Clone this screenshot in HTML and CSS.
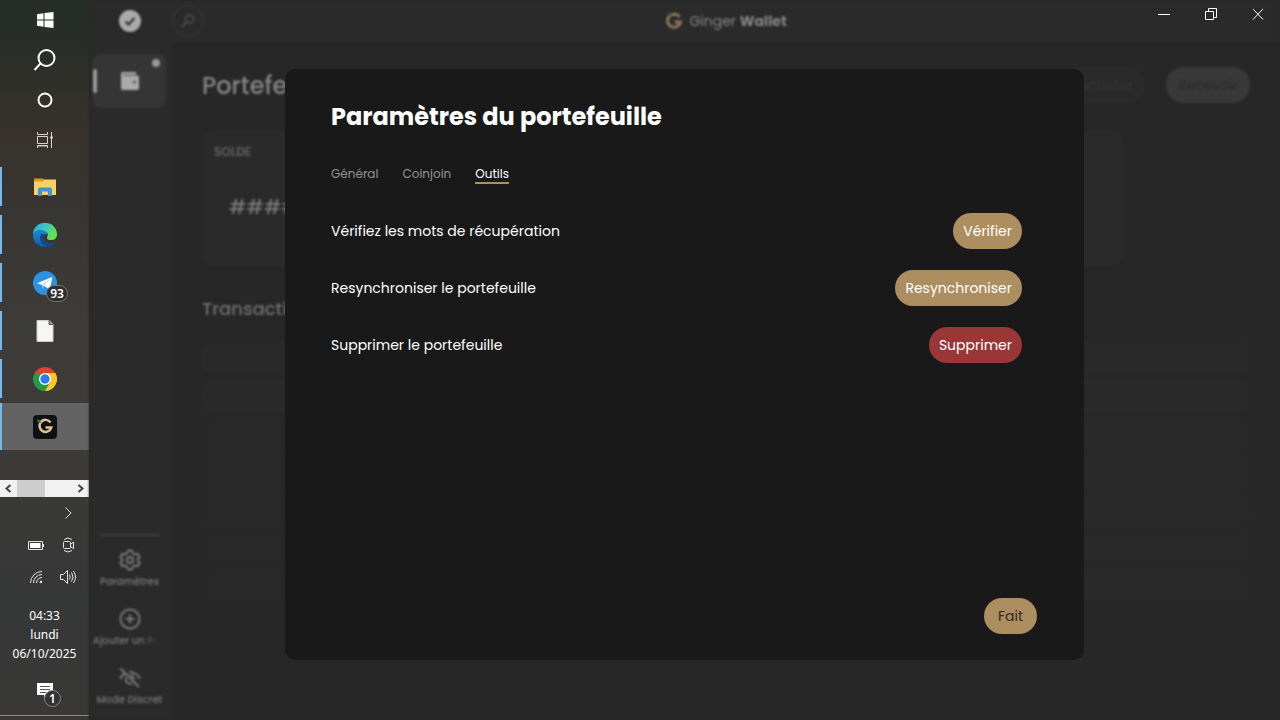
FILE: index.html
```
<!DOCTYPE html>
<html lang="fr">
<head>
  <meta charset="UTF-8" />
  <meta name="viewport" content="width=device-width, initial-scale=1.0" />
  <title>Ginger Wallet</title>
  <link rel="stylesheet" href="styles.css">
</head>
<body>
  <!-- Vertical taskbar -->
  <aside class="taskbar">
    <div class="task-system">
      <button class="task-button" aria-label="Démarrer">
        <svg width="18" height="18" viewBox="0 0 18 18" fill="#fff"><path d="M1 3.300 7.500 2.300V8.500H1zM8.500 2.100 17.500 1V8.500H8.500zM1 9.500H7.500V15.700L1 14.700zM8.500 9.500H17.500V17L8.500 15.900z"/></svg>
      </button>
      <button class="task-button" aria-label="Rechercher">
        <svg width="24" height="24" viewBox="0 0 24 24" fill="none" stroke="#fff" stroke-width="2"><circle cx="13.500" cy="10" r="8"/><path d="M7.500 15.500 1.500 22"/></svg>
      </button>
      <button class="task-button" aria-label="Cortana">
        <svg width="18" height="18" viewBox="0 0 18 18" fill="none" stroke="#fff" stroke-width="2"><circle cx="9" cy="9" r="6.500"/></svg>
      </button>
      <button class="task-button" aria-label="Affichage des tâches">
        <svg width="18" height="18" viewBox="0 0 18 18" fill="none" stroke="#d4d4d2"><path d="M1.500 1v2.500h10V1M1.500 5.500h10v7h-10zM1.500 17v-2.500h10V17M15.500 1v16"/><path d="M2 15.500h9" stroke="#777"/><circle cx="15.500" cy="6.500" r="1" fill="#fff"/></svg>
      </button>
    </div>

    <div class="task-apps">
      <button class="task-app" aria-label="Explorateur de fichiers">
        <svg width="24" height="24" viewBox="0 0 24 24"><path d="M1 3.500h9l2 2h-2l-1 2H1z" fill="#d99a1c"/><path d="M1 6.500h8.500l1.500-2h12v15.500H1z" fill="#fbd167"/><path d="M5 21v-6.500q0-2 2-2h10q2 0 2 2V21h-4v-4.500H9V21z" fill="#3f97d0"/></svg>
      </button>
      <button class="task-app" aria-label="Edge">
        <svg width="26" height="26" viewBox="0 0 26 26">
          <defs>
            <linearGradient id="edge-top" x1="0" y1="0" x2="1" y2="0.500"><stop offset="0" stop-color="#2aa3dc"/><stop offset="0.500" stop-color="#3cc8c2"/><stop offset="1" stop-color="#6be24c"/></linearGradient>
            <linearGradient id="edge-low" x1="0" y1="0" x2="0" y2="1"><stop offset="0" stop-color="#1d8bd6"/><stop offset="1" stop-color="#0c5ba8"/></linearGradient>
          </defs>
          <path d="M1 12C2-3 24-3 25 12c0 5-3 6-6 6-4 0-5-2-3-5 0-4-9-6-15-1z" fill="url(#edge-top)"/>
          <path d="M1 12c2-5 10-6 14-1 1 1 1 2 1 2-2-2-5 0-5 3 0 4 6 7 12 4-7 9-23 5-22-8z" fill="url(#edge-low)"/>
          <path d="M9 12c-3 6 1 12 8 12.700 3-.7 5-2.700 6-4.700-6 3-12 0-12-4 0-2 1-3 2-3.500C12 11.500 10 11.500 9 12z" fill="#104a88"/>
        </svg>
      </button>
      <button class="task-app" aria-label="Telegram">
        <svg width="26" height="26" viewBox="0 0 26 26"><circle cx="13" cy="13" r="12" fill="#2b93e2"/><path d="M5 13.200 19.500 7.200c.6-.2.9.1.700.8l-2.200 10.500c-.2.7-.7.8-1.200.5L11.500 15.500z" fill="#fff"/><path d="m10 15 8-6-6.500 7-.5 3.500z" fill="#b9d8f0"/></svg>
        <span class="task-count">93</span>
      </button>
      <button class="task-app" aria-label="Document">
        <svg width="18" height="22" viewBox="0 0 18 22"><path d="M1 .5h12l4 4v17H1z" fill="#f6f6f6" stroke="#ccc"/><path d="M13 .5v4h4" fill="#999" stroke="#555"/></svg>
      </button>
      <button class="task-app" aria-label="Chrome">
        <svg width="26" height="26" viewBox="0 0 26 26">
          <path d="M13 13 2.600 7A12 12 0 0 1 23.400 7z" fill="#e0402f"/>
          <path d="M13 13V7h10.400A12 12 0 0 1 13 25z" fill="#fcc826"/>
          <path d="M13 13 2.600 7A12 12 0 0 0 13 25l5.200-9z" fill="#259a4b"/>
          <path d="M2.600 7 7.800 16 10 9z" fill="#259a4b"/>
          <circle cx="13" cy="13" r="6" fill="#fff"/><circle cx="13" cy="13" r="4.700" fill="#2f7be8"/>
        </svg>
      </button>
      <button class="task-app active" aria-label="Ginger Wallet">
        <svg width="26" height="26" viewBox="0 0 26 26"><rect x="1" y="1" width="24" height="24" rx="4" fill="#0e1114"/><path d="M18.500 8.500A6 6 0 1 0 19.300 13.500H13.500" fill="none" stroke="#e9bf90" stroke-width="2.500"/><path d="M5.500 6q2-.5 3 2.500-2.500.5-3-2.500zM8 7l2-1.500" fill="#2f8a55" stroke="#2f8a55"/></svg>
      </button>
    </div>

    <div class="task-scroll">
      <svg width="17" height="17" viewBox="0 0 17 17" fill="none" stroke="#444" stroke-width="2"><path d="m10.500 5-4 3.500 4 3.500"/></svg>
      <div class="task-thumb"></div>
      <svg width="17" height="17" viewBox="0 0 17 17" fill="none" stroke="#444" stroke-width="2"><path d="m6.500 5 4 3.500-4 3.500"/></svg>
    </div>

    <div class="tray">
      <span></span>
      <svg width="18" height="18" viewBox="0 0 18 18" fill="none" stroke="#e4e4e4"><path d="m6.500 3.500 5.500 5.500-5.500 5.500"/></svg>
      <svg width="18" height="18" viewBox="0 0 18 18" fill="none" stroke="#e4e4e4"><path d="M1.500 5.500h14v8h-14zM16.500 8v3"/><path d="M3 7h10.500v5H3z" fill="#fff" stroke="none"/></svg>
      <svg width="18" height="18" viewBox="0 0 18 18" fill="none" stroke="#e4e4e4"><rect x="4.500" y="5.500" width="7" height="7" rx="1"/><path d="m12 8 2.500-2v6.500L12 11M5 3.500q4-3 8 0M5 14.500q4 3 8 0"/></svg>
      <svg width="18" height="18" viewBox="0 0 18 18" fill="none" stroke="#e4e4e4"><path d="M3.500 15A11.500 11.500 0 0 1 15 3.500M6.500 15A8.500 8.500 0 0 1 15 6.500M9.500 15A5.500 5.500 0 0 1 15 9.500"/><path d="M12.500 15a2.500 2.500 0 0 1 2.500-2.500V15z" fill="#e4e4e4" stroke="none"/></svg>
      <svg width="18" height="18" viewBox="0 0 18 18" fill="none" stroke="#e4e4e4"><path d="M1.500 6.500h3l4-4v13l-4-4h-3zM10.500 6.500q1.500 2.500 0 5M12.500 4.500q3 4.500 0 9M14.500 3q4 6 0 12"/></svg>
    </div>

    <div class="clock">
      <span>04:33</span>
      <span>lundi</span>
      <span>06/10/2025</span>
    </div>

    <button class="notifications" aria-label="Notifications">
      <svg width="18" height="18" viewBox="0 0 18 18"><path d="M1 1h16v12h-6l-3 3.500V13H1z" fill="#fff"/><path d="M4 4.500h10M4 7.500h10M4 10.500h6" stroke="#555"/></svg>
      <span class="notif-count">1</span>
    </button>
  </aside>

  <div class="app">
    <!-- Wallet window, dimmed behind the dialog -->
    <div class="backdrop">
      <header class="titlebar">
        <svg width="24" height="24" viewBox="0 0 24 24"><circle cx="12" cy="12" r="11" fill="#aaa"/><path d="m7.500 12.500 3 3 6-6.500" fill="none" stroke="#2c2c2c" stroke-width="2"/></svg>
        <button class="search-button" aria-label="Chercher">
          <svg width="16" height="16" viewBox="0 0 16 16" fill="none" stroke="#484848" stroke-width="2"><circle cx="9.500" cy="6" r="4"/><path d="M6.500 9 2 14"/></svg>
        </button>
        <div class="brand">
          <svg width="18" height="20" viewBox="0 0 18 20" fill="none"><path d="M14.500 6A6.500 6.500 0 1 0 15.500 11H9.500" stroke="#90765a" stroke-width="3"/><path d="M2 3.500q3-1 4 2" stroke="#3b5546" stroke-width="2"/></svg>
          <span>Ginger <b>Wallet</b></span>
        </div>
      </header>

      <div class="body">
        <nav class="sidebar">
          <a class="wallet-tile" href="#" aria-label="Portefeuille">
            <svg width="22" height="22" viewBox="0 0 22 22"><path d="M2 4q0-2 2-2h13v2H4v2h16v12q0 2-2 2H4q-2 0-2-2z" fill="#aaa"/><path d="M4 4h14v2H4z" fill="#777"/><circle cx="15.500" cy="12" r="1.500" fill="#555"/></svg>
          </a>
          <div class="side-links">
            <a href="#">
              <svg width="24" height="24" viewBox="0 0 24 24" fill="none" stroke="#777" stroke-width="2" stroke-linejoin="round"><path d="m10 2.500h4l.8 2.800 2 1.200 2.900-.8 2 3.500-2.100 2v1.600l2.100 2-2 3.500-2.900-.8-2 1.200-.8 2.800h-4l-.8-2.800-2-1.200-2.900.8-2-3.500 2.100-2v-1.600l-2.100-2 2-3.500 2.900.8 2-1.200z"/><circle cx="12" cy="12" r="3"/></svg>
              <span>Paramètres</span>
            </a>
            <a href="#">
              <svg width="24" height="24" viewBox="0 0 24 24" fill="none" stroke="#777" stroke-width="2"><circle cx="12" cy="12" r="9.500"/><path d="M12 7.500v9M7.500 12h9"/></svg>
              <span class="faded">Ajouter un Po</span>
            </a>
            <a href="#">
              <svg width="24" height="24" viewBox="0 0 24 24" fill="none" stroke="#777" stroke-width="2"><path d="M2.500 2.500 21 21M2 13q2-4 5-5.500M11 6q8 0 11 7M8.500 11.500a4 4 0 0 0 5.500 5.500M12 9.500q3.500 0 4 3.500"/></svg>
              <span>Mode Discret</span>
            </a>
          </div>
        </nav>

        <main class="wallet">
          <div class="wallet-head">
            <h1>Portefeuille</h1>
            <button class="head-button">Acheter</button>
            <button class="head-button receive">Recevoir</button>
          </div>
          <section class="balance">
            <h2>SOLDE</h2>
            <p>#########</p>
          </section>
          <h3>Transactions</h3>
          <div class="transactions">
            <div></div>
            <div></div>
            <div></div>
            <div></div>
            <div></div>
            <div></div>
            <div></div>
          </div>
        </main>
      </div>
    </div>

    <div class="window-controls">
      <button aria-label="Réduire"><svg width="14" height="14" viewBox="0 0 14 14" stroke="#fff"><path d="M1 7.500h12"/></svg></button>
      <button aria-label="Restaurer"><svg width="14" height="14" viewBox="0 0 14 14" fill="none" stroke="#fff"><path d="M1.500 4.500h8v8h-8zM4.500 4V1.500h8v9H10"/></svg></button>
      <button aria-label="Fermer"><svg width="14" height="14" viewBox="0 0 14 14" stroke="#fff"><path d="m2 2 10 10.500M12 2 2 12.500"/></svg></button>
    </div>

    <!-- Settings dialog -->
    <div class="overlay">
      <div class="dialog" role="dialog" aria-labelledby="dialog-title">
        <h2 id="dialog-title">Paramètres du portefeuille</h2>
        <div class="tabs" role="tablist">
          <button role="tab">Général</button>
          <button role="tab">Coinjoin</button>
          <button role="tab" class="selected" aria-selected="true">Outils</button>
        </div>
        <div class="tools">
          <div class="tool">
            <span>Vérifiez les mots de récupération</span>
            <button class="pill">Vérifier</button>
          </div>
          <div class="tool">
            <span>Resynchroniser le portefeuille</span>
            <button class="pill">Resynchroniser</button>
          </div>
          <div class="tool">
            <span>Supprimer le portefeuille</span>
            <button class="pill danger">Supprimer</button>
          </div>
        </div>
        <button class="pill done">Fait</button>
      </div>
    </div>
  </div>
</body>
</html>
```
FILE: styles.css
```
/* Reset and base styles */
* {
  margin: 0;
  padding: 0;
  box-sizing: border-box;
}
body {
  display: flex;
  height: 100vh;
  overflow: hidden;
  background: #272727;
  color: #fff;
  font-family: "Poppins", "Inter", sans-serif;
  font-size: 14px;
}
button {
  border: none;
  background: none;
  color: inherit;
  font: inherit;
  cursor: pointer;
}
a {
  color: inherit;
  text-decoration: none;
}
svg {
  display: block;
  flex: none;
}

/* Taskbar */
.taskbar {
  display: flex;
  flex-direction: column;
  flex: none;
  width: 89px;
  background: linear-gradient(to bottom, #262d29 0, #2b2e29 60px, #37322b 130px, #373532 200px, #3d3c39 330px, #3b3a38 470px, #363737 600px, #393837 100%);
  font-family: "Noto Sans", sans-serif;
}
.task-button,
.task-app {
  position: relative;
  display: flex;
  align-items: center;
  justify-content: center;
  width: 100%;
  height: 40px;
}
.task-apps {
  display: flex;
  flex-direction: column;
  gap: 1px;
  margin-top: 3px;
}
.task-app {
  height: 47px;
}
.task-app::before {
  content: "";
  position: absolute;
  left: 0;
  top: 4px;
  bottom: 4px;
  width: 2px;
  background: #76b9ed;
}
.task-app.active {
  background: #636363;
}
.task-app.active::before {
  top: 0;
  bottom: 0;
}
.task-count {
  position: absolute;
  left: 46px;
  top: 26px;
  width: 22px;
  border: 1px solid #777;
  border-radius: 9px;
  background: #2e2e2e;
  font-size: 12px;
  font-weight: 600;
  line-height: 15px;
  text-align: center;
}
.task-scroll {
  display: flex;
  justify-content: space-between;
  margin-top: 30px;
  height: 17px;
  background: #f1f1f1;
}
.task-thumb {
  width: 28px;
  margin-right: auto;
  background: #cdcdcd;
}
.tray {
  display: grid;
  grid-template-columns: 32px 32px;
  grid-auto-rows: 32px;
  justify-content: end;
  place-items: center;
  padding-right: 5px;
}
.clock {
  display: flex;
  flex-direction: column;
  margin-top: 13px;
  font-size: 12px;
  line-height: 19px;
  text-align: center;
}
.notifications {
  position: relative;
  display: flex;
  align-items: center;
  justify-content: center;
  flex: 1;
  margin-bottom: 4px;
  padding-top: 4px;
  border-bottom: 1px solid #8a8a88;
}
.notif-count {
  position: absolute;
  left: 44px;
  bottom: 8px;
  width: 17px;
  border: 1px solid #888;
  border-radius: 50%;
  background: #333;
  font-size: 12px;
  font-weight: 600;
  line-height: 15px;
}

/* Wallet window */
.app {
  position: relative;
  flex: 1;
  min-width: 0;
}
.backdrop {
  display: flex;
  flex-direction: column;
  height: 100%;
  background: #2a2a2a;
  filter: blur(1px);
}
.titlebar {
  display: flex;
  align-items: center;
  height: 42px;
  padding: 0 32px 0 29px;
}
.search-button {
  display: flex;
  align-items: center;
  justify-content: center;
  width: 32px;
  height: 32px;
  margin-left: 30px;
  border: 1px solid #3c3c3c;
  border-radius: 50%;
}
.brand {
  display: flex;
  align-items: center;
  justify-content: center;
  gap: 6px;
  flex: 1;
  color: #858585;
}
.body {
  display: flex;
  flex: 1;
}
.sidebar {
  display: flex;
  flex-direction: column;
  justify-content: space-between;
  width: 84px;
  padding: 12px 7px 13px 4px;
}
.wallet-tile {
  position: relative;
  display: flex;
  align-items: center;
  justify-content: center;
  height: 54px;
  border-radius: 8px;
  background: #353535;
}
.wallet-tile::before {
  content: "";
  position: absolute;
  left: 0;
  top: 15px;
  width: 4px;
  height: 24px;
  border-radius: 2px;
  background: #999;
}
.wallet-tile::after {
  content: "";
  position: absolute;
  right: 6px;
  top: 5px;
  width: 8px;
  height: 8px;
  border-radius: 50%;
  background: #999;
}
.side-links {
  display: flex;
  flex-direction: column;
  gap: 18px;
  color: #7a7a7a;
  font-size: 10px;
  font-weight: 500;
  line-height: 14px;
}
.side-links::before {
  content: "";
  height: 2px;
  margin: 0 6px -6px;
  background: #3b3b3b;
}
.side-links a {
  display: flex;
  flex-direction: column;
  align-items: center;
  gap: 3px;
}
.side-links span {
  white-space: nowrap;
}
.side-links .faded {
  align-self: flex-start;
  mask-image: linear-gradient(to right, #000 70%, transparent 98%);
}
.wallet {
  flex: 1;
  padding: 25px 30px 0 29px;
  background: #272727;
}
.wallet-head {
  display: flex;
  align-items: center;
  gap: 21px;
  height: 36px;
}
.wallet-head h1 {
  flex: 1;
  color: #848484;
  font-size: 24px;
  font-weight: 500;
}
.head-button {
  height: 36px;
  padding: 0 12px;
  border-radius: 18px;
  background: #2a2a2a;
  color: #353535;
}
.head-button.receive {
  background: #383838;
  color: #2b2b2b;
}
.balance {
  height: 136px;
  margin: 27px 127px 0 0;
  padding: 14px 12px;
  border-radius: 12px;
  background: #2a2a2a;
  color: #606060;
}
.balance h2 {
  font-size: 12px;
  font-weight: 600;
  line-height: 16px;
}
.balance p {
  padding: 32px 15px;
  color: #777;
  font-size: 20px;
  font-weight: 500;
  line-height: 30px;
}
.wallet h3 {
  margin: 31px 0 20px;
  color: #707070;
  font-size: 18px;
  font-weight: 500;
  line-height: 24px;
}
.transactions {
  display: flex;
  flex-direction: column;
  gap: 4px;
}
.transactions div {
  height: 34px;
  border-radius: 12px;
  background: #292929;
}
.transactions div:nth-child(n + 3) {
  background: #282828;
}

/* Window controls */
.window-controls {
  position: absolute;
  top: 0;
  right: -1px;
  display: flex;
}
.window-controls button {
  display: flex;
  align-items: center;
  justify-content: center;
  width: 47px;
  height: 28px;
}

/* Settings dialog */
.overlay {
  position: absolute;
  inset: 43px 0 0;
  display: flex;
  justify-content: center;
  padding: 26px 0 60px;
}
.dialog {
  display: flex;
  flex-direction: column;
  width: 100%;
  max-width: 799px;
  padding: 31px 47px 26px 46px;
  border-radius: 10px;
  background: #191919;
}
.dialog h2 {
  font-size: 24px;
  line-height: 34px;
}
.tabs {
  display: flex;
  gap: 24px;
  margin-top: 31px;
  color: #949494;
  font-size: 12px;
  line-height: 17px;
}
.tabs button {
  border-bottom: 2px solid transparent;
}
.tabs .selected {
  border-color: #b09062;
  color: #fff;
}
.tools {
  display: flex;
  flex-direction: column;
  flex: 1;
  gap: 21px;
  margin-top: 29px;
  padding-right: 15px;
}
.tool {
  display: flex;
  align-items: center;
  justify-content: space-between;
}
.pill {
  height: 36px;
  padding: 0 10px;
  border-radius: 18px;
  background: #ad8e60;
}
.pill.danger {
  background: #993636;
}
.pill.done {
  align-self: flex-end;
  padding: 0 14px;
  color: #33291a;
}
```
